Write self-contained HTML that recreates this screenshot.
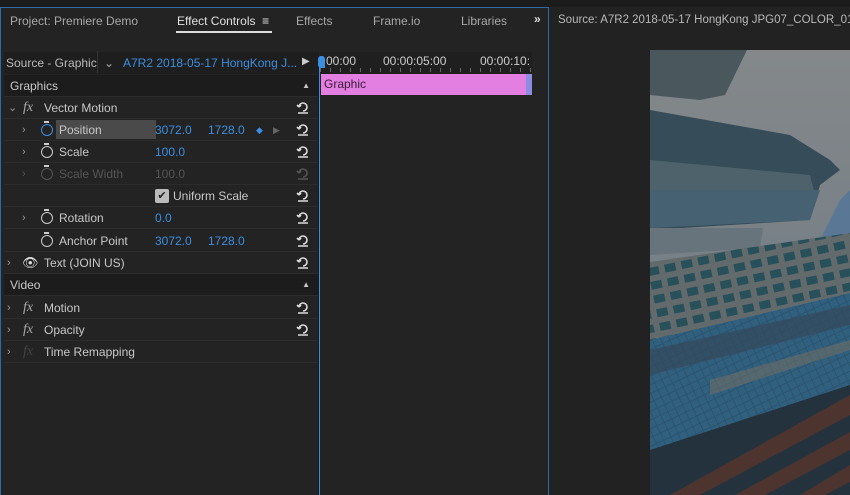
<!DOCTYPE html>
<html><head><style>
*{margin:0;padding:0;box-sizing:border-box}
body{width:850px;height:495px;background:#232323;font-family:"Liberation Sans",sans-serif;font-size:12px;color:#c8c8c8;position:relative;overflow:hidden}
.a{position:absolute;white-space:nowrap}
.row{position:absolute;left:4px;width:314px;height:22px;border-bottom:1px solid #2c2c2c;line-height:22px}
.hd{background:#1c1c1c}
.b{color:#3b8ee0}
.rs{position:absolute;right:8px;top:3px;width:14px;height:14px}
.chev{position:absolute;color:#999;font-size:11px}
.sw{position:absolute;width:12px;height:12px;border:1.5px solid #ccc;border-radius:50%;top:5px}
.sw:before{content:"";position:absolute;left:2px;top:-4px;width:5px;height:2px;background:#ccc}
.fx{position:absolute;font-family:"Liberation Serif",serif;font-style:italic;font-size:14px;color:#aaa}
</style></head><body>
<div class="a" style="left:0;top:0;width:850px;height:7px;background:#1b1b1b"></div>
<div class="a" style="left:0;top:7px;width:549px;height:488px;border:1px solid #2f6aa3;border-bottom:none"></div>
<div class="a" style="left:10px;top:14px;color:#a8a8a8">Project: Premiere Demo</div>
<div class="a" style="left:177px;top:14px;color:#e0e0e0">Effect Controls &nbsp;≡</div>
<div class="a" style="left:176px;top:31px;width:96px;height:2px;background:#ddd"></div>
<div class="a" style="left:296px;top:14px;color:#a8a8a8">Effects</div>
<div class="a" style="left:373px;top:14px;color:#a8a8a8">Frame.io</div>
<div class="a" style="left:461px;top:14px;color:#a8a8a8">Libraries</div>
<div class="a" style="left:534px;top:12px;color:#ddd;font-weight:bold">»</div>
<div class="a" style="left:550px;top:7px;width:300px;height:488px;background:#222"></div>
<div class="a" style="left:558px;top:14px;color:#b8b8b8;font-size:11.5px">Source: A7R2 2018-05-17 HongKong JPG07_COLOR_01_</div>
<div class="a" style="left:4px;top:52px;width:314px;height:22px;background:#1e1e1e"></div>
<div class="a" style="left:6px;top:56px;color:#bbb">Source - Graphic</div>
<div class="a" style="left:97px;top:51px;width:1px;height:22px;background:#333"></div>
<div class="a" style="left:104px;top:56px;color:#aaa">⌄</div>
<div class="a" style="left:123px;top:56px;color:#3b8ee0">A7R2 2018-05-17 HongKong J...</div>
<div class="a" style="left:302px;top:56px;color:#ccc;font-size:10px">▶</div>
<div class="row hd" style="top:75px"><span style="margin-left:6px">Graphics</span><span class="a" style="right:8px;top:0;font-size:8px">▲</span></div>
<div class="row" style="top:97px"><span class="chev" style="left:4px">⌄</span><span class="fx" style="left:19px">fx</span><span class="a" style="left:40px">Vector Motion</span><svg class="rs" viewBox="0 0 14 14"><path d="M3 7a4 4 0 1 1 4 4M3 7l-2-2M3 7l2-2M2 13h10" stroke="#ddd" stroke-width="1.6" fill="none"/></svg></div>
<div class="row" style="top:119px"><span class="chev" style="left:18px">›</span><span class="sw" style="left:37px;border-color:#3b8ee0"></span><span class="a" style="left:52px;top:1px;width:100px;height:19px;background:#4a4a4a"></span><span class="a" style="left:55px">Position</span><span class="a b" style="left:151px">3072.0</span><span class="a b" style="left:204px">1728.0</span><span class="a" style="left:252px;color:#3b8ee0;font-size:9px">◆</span><span class="a" style="left:269px;color:#666;font-size:9px">▶</span><svg class="rs" viewBox="0 0 14 14"><path d="M3 7a4 4 0 1 1 4 4M3 7l-2-2M3 7l2-2M2 13h10" stroke="#ddd" stroke-width="1.6" fill="none"/></svg></div>
<div class="row" style="top:141px"><span class="chev" style="left:18px">›</span><span class="sw" style="left:37px"></span><span class="a" style="left:55px">Scale</span><span class="a b" style="left:151px">100.0</span><svg class="rs" viewBox="0 0 14 14"><path d="M3 7a4 4 0 1 1 4 4M3 7l-2-2M3 7l2-2M2 13h10" stroke="#ddd" stroke-width="1.6" fill="none"/></svg></div>
<div class="row" style="top:163px;color:#555"><span class="chev" style="left:18px;color:#555">›</span><span class="sw" style="left:37px;border-color:#555"></span><span class="a" style="left:55px">Scale Width</span><span class="a" style="left:151px">100.0</span><svg class="rs" viewBox="0 0 14 14"><path d="M3 7a4 4 0 1 1 4 4M3 7l-2-2M3 7l2-2M2 13h10" stroke="#555" stroke-width="1.6" fill="none"/></svg></div>
<div class="row" style="top:185px"><span class="a" style="left:151px;top:4px;width:14px;height:14px;background:#bbb;border-radius:2px;color:#222;font-size:11px;line-height:14px;text-align:center">✔</span><span class="a" style="left:169px">Uniform Scale</span><svg class="rs" viewBox="0 0 14 14"><path d="M3 7a4 4 0 1 1 4 4M3 7l-2-2M3 7l2-2M2 13h10" stroke="#ddd" stroke-width="1.6" fill="none"/></svg></div>
<div class="row" style="top:207px"><span class="chev" style="left:18px">›</span><span class="sw" style="left:37px"></span><span class="a" style="left:55px">Rotation</span><span class="a b" style="left:151px">0.0</span><svg class="rs" viewBox="0 0 14 14"><path d="M3 7a4 4 0 1 1 4 4M3 7l-2-2M3 7l2-2M2 13h10" stroke="#ddd" stroke-width="1.6" fill="none"/></svg></div>
<div class="row" style="top:230px"><span class="sw" style="left:37px"></span><span class="a" style="left:55px">Anchor Point</span><span class="a b" style="left:151px">3072.0</span><span class="a b" style="left:204px">1728.0</span><svg class="rs" viewBox="0 0 14 14"><path d="M3 7a4 4 0 1 1 4 4M3 7l-2-2M3 7l2-2M2 13h10" stroke="#ddd" stroke-width="1.6" fill="none"/></svg></div>
<div class="row" style="top:252px"><span class="chev" style="left:3px">›</span><span class="a" style="left:18px;color:#ddd;font-size:13px">👁</span><span class="a" style="left:40px">Text (JOIN US)</span><svg class="rs" viewBox="0 0 14 14"><path d="M3 7a4 4 0 1 1 4 4M3 7l-2-2M3 7l2-2M2 13h10" stroke="#ddd" stroke-width="1.6" fill="none"/></svg></div>
<div class="row hd" style="top:274px"><span style="margin-left:6px">Video</span><span class="a" style="right:8px;top:0;font-size:8px">▲</span></div>
<div class="row" style="top:297px"><span class="chev" style="left:3px">›</span><span class="fx" style="left:19px">fx</span><span class="a" style="left:40px">Motion</span><svg class="rs" viewBox="0 0 14 14"><path d="M3 7a4 4 0 1 1 4 4M3 7l-2-2M3 7l2-2M2 13h10" stroke="#ddd" stroke-width="1.6" fill="none"/></svg></div>
<div class="row" style="top:319px"><span class="chev" style="left:3px">›</span><span class="fx" style="left:19px">fx</span><span class="a" style="left:40px">Opacity</span><svg class="rs" viewBox="0 0 14 14"><path d="M3 7a4 4 0 1 1 4 4M3 7l-2-2M3 7l2-2M2 13h10" stroke="#ddd" stroke-width="1.6" fill="none"/></svg></div>
<div class="row" style="top:341px"><span class="chev" style="left:3px">›</span><span class="fx" style="left:19px;color:#444">fx</span><span class="a" style="left:40px">Time Remapping</span></div>
<div class="a" style="left:318px;top:52px;width:1px;height:443px;background:#1a1a1a"></div>
<div class="a" style="left:320px;top:52px;width:212px;height:22px;background:#1f1f1f"></div>
<div class="a" style="left:326px;top:54px;color:#ccc">00:00</div>
<div class="a" style="left:383px;top:54px;color:#ccc">00:00:05:00</div>
<div class="a" style="left:480px;top:54px;color:#ccc">00:00:10:</div>
<div class="a" style="left:320px;top:68px;width:212px;height:4px;background:repeating-linear-gradient(90deg,#666 0 1px,transparent 1px 10px)"></div>
<div class="a" style="left:318px;top:56px;width:7px;height:12px;background:#3b8ee0;border-radius:3px 3px 0 3px"></div>
<div class="a" style="left:319px;top:66px;width:1px;height:429px;background:#3b8ee0"></div>
<div class="a" style="left:321px;top:74px;width:211px;height:21px;background:#e27fe0;color:#3a1a3a;line-height:21px;padding-left:3px">Graphic</div>
<div class="a" style="left:526px;top:74px;width:6px;height:21px;background:#8c8ce0"></div>
<svg class="a" style="left:650px;top:50px" width="200" height="445" viewBox="0 0 200 445">
<defs>
<linearGradient id="s" x1="0" y1="0" x2="0" y2="1"><stop offset="0" stop-color="#84888a"/><stop offset="1" stop-color="#6a7884"/></linearGradient>
<pattern id="w" width="17" height="14" patternUnits="userSpaceOnUse" patternTransform="rotate(-12)"><rect width="17" height="14" fill="#626a6c"/><rect x="3" y="3" width="11" height="8" fill="#28505a"/></pattern>
<pattern id="g" width="8" height="8" patternUnits="userSpaceOnUse" patternTransform="rotate(-25)"><rect width="8" height="8" fill="#2a5470"/><rect width="7" height="7" fill="#31607f"/></pattern>
</defs>
<rect width="200" height="445" fill="url(#s)"/>
<polygon points="190,150 200,140 200,190 170,190" fill="#5a7896"/>
<polygon points="0,0 97,0 75,45 50,50 0,45" fill="#4a575c"/>
<polygon points="0,60 140,85 180,110 190,120 170,135 160,170 0,180" fill="#364c58"/>
<polygon points="0,110 160,125 165,145 0,140" fill="#4e626c"/>
<polygon points="0,140 170,140 160,170 0,178" fill="#466272"/>
<polygon points="0,178 113,178 110,198 0,205" fill="#68747c"/>
<polygon points="0,212 200,183 200,243 0,290" fill="url(#w)"/>
<polygon points="0,290 200,243 200,445 0,445" fill="url(#g)"/>
<polygon points="0,300 200,255 200,275 0,325" fill="#34495a" opacity=".7"/>
<polygon points="60,330 200,290 200,300 60,345" fill="#7a7060" opacity=".5"/>
<polygon points="0,400 200,335 200,445 0,445" fill="#24323e"/>
<polygon points="20,445 200,345 200,365 50,445" fill="#4e342e"/>
<polygon points="85,445 200,382 200,400 115,445" fill="#4e342e"/>
<polygon points="150,445 200,415 200,432 175,445" fill="#4e342e"/>
</svg>
</body></html>
